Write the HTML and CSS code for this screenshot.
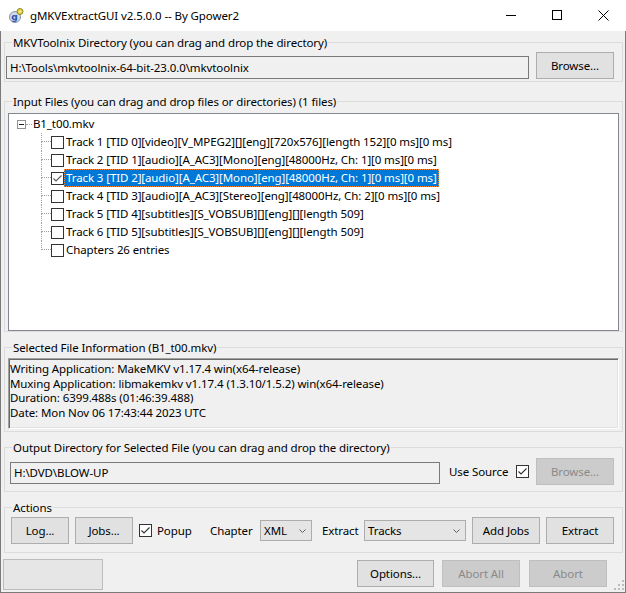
FILE: index.html
```html
<!DOCTYPE html>
<html>
<head>
<meta charset="utf-8">
<title>gMKVExtractGUI</title>
<link rel="stylesheet" href="styles.css">
</head>
<body>
<div class="window">
  <div class="titlebar">
    <svg class="app-icon" viewBox="0 0 16 16" width="16" height="16">
      <circle cx="7" cy="10" r="5.5" fill="#d4dae4" stroke="#8494ac" stroke-width="1"/>
      <text x="3.2" y="12.6" font-family="DejaVu Sans, sans-serif" font-size="9" font-weight="bold" fill="#2452b4">g</text>
      <circle cx="12" cy="4.5" r="3" fill="#e6d23c" stroke="#8c8a2a" stroke-width="1"/>
      <circle cx="12" cy="4.5" r="1" fill="#fff8b0"/>
    </svg>
    <span class="title">gMKVExtractGUI v2.5.0.0 -- By Gpower2</span>
    <div class="caption">
      <span class="cap-btn"><svg width="10" height="10" viewBox="0 0 10 10"><path d="M0 5.5H10" stroke="#000" stroke-width="1"/></svg></span>
      <span class="cap-btn"><svg width="10" height="10" viewBox="0 0 10 10"><rect x="0.5" y="0.5" width="9" height="9" fill="none" stroke="#000" stroke-width="1"/></svg></span>
      <span class="cap-btn"><svg width="11" height="11" viewBox="0 0 11 11"><path d="M0.5 0.5L10.5 10.5M10.5 0.5L0.5 10.5" stroke="#000" stroke-width="1"/></svg></span>
    </div>
  </div>

  <div class="client">
    <fieldset class="group g-mkv">
      <legend>MKVToolnix Directory (you can drag and drop the directory)</legend>
      <div class="gbody">
        <div class="textbox tb-mkv">H:\Tools\mkvtoolnix-64-bit-23.0.0\mkvtoolnix</div>
        <button class="btn btn-browse">Browse...</button>
      </div>
    </fieldset>

    <fieldset class="group g-input">
      <legend>Input Files (you can drag and drop files or directories) (1 files)</legend>
      <div class="gbody">
        <div class="tree">
          <div class="trow root">
            <svg class="expander" width="9" height="9" viewBox="0 0 9 9"><rect x="0.5" y="0.5" width="8" height="8" fill="#fff" stroke="#919191"/><path d="M2 4.5H7" stroke="#1e1e1e"/></svg>
            <span class="root-line"></span>
            <span class="root-text">B1_t00.mkv</span>
          </div>
          <div class="children">
            <div class="trow">
              <span class="branch"><span class="up"></span><span class="down"></span></span>
              <span class="cb"></span>
              <span class="tlabel">Track 1 [TID 0][video][V_MPEG2][][eng][720x576][length 152][0 ms][0 ms]</span>
            </div>
            <div class="trow">
              <span class="branch"><span class="up"></span><span class="down"></span></span>
              <span class="cb"></span>
              <span class="tlabel">Track 2 [TID 1][audio][A_AC3][Mono][eng][48000Hz, Ch: 1][0 ms][0 ms]</span>
            </div>
            <div class="trow">
              <span class="branch"><span class="up"></span><span class="down"></span></span>
              <span class="cb checked gray"><svg width="11" height="11" viewBox="0 0 11 11"><path d="M1.5 5.5L4 8L9.5 2.5" fill="none" stroke="#5a5a5a" stroke-width="1.1"/></svg></span>
              <span class="tlabel sel">Track 3 [TID 2][audio][A_AC3][Mono][eng][48000Hz, Ch: 1][0 ms][0 ms]</span>
            </div>
            <div class="trow">
              <span class="branch"><span class="up"></span><span class="down"></span></span>
              <span class="cb"></span>
              <span class="tlabel">Track 4 [TID 3][audio][A_AC3][Stereo][eng][48000Hz, Ch: 2][0 ms][0 ms]</span>
            </div>
            <div class="trow">
              <span class="branch"><span class="up"></span><span class="down"></span></span>
              <span class="cb"></span>
              <span class="tlabel">Track 5 [TID 4][subtitles][S_VOBSUB][][eng][][length 509]</span>
            </div>
            <div class="trow">
              <span class="branch"><span class="up"></span><span class="down"></span></span>
              <span class="cb"></span>
              <span class="tlabel">Track 6 [TID 5][subtitles][S_VOBSUB][][eng][][length 509]</span>
            </div>
            <div class="trow last">
              <span class="branch"><span class="up"></span><span class="down"></span></span>
              <span class="cb"></span>
              <span class="tlabel">Chapters 26 entries</span>
            </div>
          </div>
        </div>
      </div>
    </fieldset>

    <fieldset class="group g-info">
      <legend>Selected File Information (B1_t00.mkv)</legend>
      <div class="gbody">
        <div class="info">
          <div class="info-line">Writing Application: MakeMKV v1.17.4 win(x64-release)</div>
          <div class="info-line">Muxing Application: libmakemkv v1.17.4 (1.3.10/1.5.2) win(x64-release)</div>
          <div class="info-line">Duration: 6399.488s (01:46:39.488)</div>
          <div class="info-line">Date: Mon Nov 06 17:43:44 2023 UTC</div>
        </div>
      </div>
    </fieldset>

    <fieldset class="group g-out">
      <legend>Output Directory for Selected File (you can drag and drop the directory)</legend>
      <div class="gbody">
        <div class="textbox tb-out">H:\DVD\BLOW-UP</div>
        <span class="use-src">Use Source</span>
        <span class="cb checked"><svg width="11" height="11" viewBox="0 0 11 11"><path d="M1.5 5.5L4 8L9.5 2.5" fill="none" stroke="#333" stroke-width="1.1"/></svg></span>
        <button class="btn btn-browse disabled">Browse...</button>
      </div>
    </fieldset>

    <fieldset class="group g-actions">
      <legend>Actions</legend>
      <div class="gbody">
        <button class="btn btn-small">Log...</button>
        <button class="btn btn-small btn-jobs">Jobs...</button>
        <span class="cb checked cb-popup"><svg width="11" height="11" viewBox="0 0 11 11"><path d="M1.5 5.5L4 8L9.5 2.5" fill="none" stroke="#333" stroke-width="1.1"/></svg></span>
        <span class="lbl lbl-popup">Popup</span>
        <span class="lbl lbl-chapter">Chapter</span>
        <div class="combo combo-xml"><span>XML</span><svg class="chev" width="7" height="4" viewBox="0 0 7 4"><path d="M0.5 0.5L3.5 3.5L6.5 0.5" fill="none" stroke="#606060"/></svg></div>
        <span class="lbl lbl-extract">Extract</span>
        <div class="combo combo-tracks"><span>Tracks</span><svg class="chev" width="7" height="4" viewBox="0 0 7 4"><path d="M0.5 0.5L3.5 3.5L6.5 0.5" fill="none" stroke="#606060"/></svg></div>
        <button class="btn btn-wide btn-addjobs">Add Jobs</button>
        <button class="btn btn-wide btn-extract">Extract</button>
      </div>
    </fieldset>

    <div class="bottombar">
      <div class="progress"></div>
      <button class="btn btn-options">Options...</button>
      <button class="btn btn-abortall disabled">Abort All</button>
      <button class="btn btn-abort disabled">Abort</button>
      <svg class="grip" width="10" height="10" viewBox="0 0 10 10">
        <rect x="8" y="0" width="2" height="2" fill="#bcbcbc"/>
        <rect x="4" y="4" width="2" height="2" fill="#bcbcbc"/>
        <rect x="8" y="4" width="2" height="2" fill="#bcbcbc"/>
        <rect x="0" y="8" width="2" height="2" fill="#bcbcbc"/>
        <rect x="4" y="8" width="2" height="2" fill="#bcbcbc"/>
        <rect x="8" y="8" width="2" height="2" fill="#bcbcbc"/>
      </svg>
    </div>
  </div>
</div>
</body>
</html>
```

FILE: styles.css
```css
* { box-sizing: border-box; }
html, body { margin: 0; padding: 0; background: #f0f0f0; }
body {
  font-family: "Noto Sans", "Open Sans", sans-serif;
  font-size: 11.5px;
  letter-spacing: -0.1px;
  color: #000;
}

.window {
  width: 626px;
  height: 593px;
  display: flex;
  flex-direction: column;
  background: #f0f0f0;
  overflow: hidden;
}

/* title bar */
.titlebar {
  flex: none;
  height: 31px;
  background: #fff;
  display: flex;
  align-items: center;
}
.app-icon { flex: none; margin-left: 8px; margin-top: -1px; }
.title { margin-left: 6px; line-height: 15px; white-space: nowrap; }
.caption { margin-left: auto; display: flex; align-self: flex-start; }
.cap-btn {
  width: 46px;
  height: 30px;
  display: flex;
  align-items: center;
  justify-content: center;
}

/* client area */
.client {
  flex: 1;
  display: flex;
  flex-direction: column;
  border: 1px solid #7a7a7a;
  border-top: 0;
}

.group {
  margin: 0 2px 0 3px;
  padding: 0;
  border: 1px solid #dcdcdc;
  min-width: 0;
}
.group legend {
  margin-left: 7px;
  padding: 0 1px;
  line-height: 15px;
  height: 15px;
  white-space: nowrap;
}
.g-mkv { margin-top: 4px; }
.g-input { margin-top: 12px; }
.g-info, .g-out, .g-actions { margin-top: 8px; }

/* generic controls */
.textbox {
  border: 1px solid #7a7a7a;
  background: #f0f0f0;
  padding-left: 3px;
  white-space: nowrap;
  overflow: hidden;
}
.btn {
  flex: none;
  height: 27px;
  padding: 0;
  margin: 0;
  border: 1px solid #adadad;
  background: #e1e1e1;
  font: inherit;
  letter-spacing: inherit;
  color: #000;
  display: flex;
  align-items: center;
  justify-content: center;
  white-space: nowrap;
}
.btn.disabled {
  background: #cccccc;
  border-color: #bfbfbf;
  color: #8a8a8a;
}
.cb {
  flex: none;
  width: 13px;
  height: 13px;
  border: 1px solid #333;
  background: #fff;
  display: flex;
  align-items: center;
  justify-content: center;
}
.cb svg { display: block; }

/* MKVToolnix group */
.g-mkv .gbody {
  display: flex;
  align-items: flex-start;
  gap: 7px;
  padding: 2px 8px 2px 1px;
}
.tb-mkv { width: 523px; height: 23px; line-height: 21px; margin-top: 4px; }
.btn-browse { width: 78px; }

/* Input files / tree */
.g-input .gbody { padding: 4px 3px 0 3px; }
.tree {
  width: 611px;
  height: 218px;
  background: #fff;
  border: 1px solid #828790;
  padding-top: 1px;
  overflow: hidden;
}
.trow {
  height: 18px;
  display: flex;
  align-items: center;
  line-height: 18px;
  white-space: nowrap;
}
.root { padding-left: 8px; }
.expander { flex: none; display: block; }
.root-line {
  width: 6px;
  height: 1px;
  border-top: 1px dotted #a0a0a0;
  margin-top: 1px;
}
.root-text { margin-left: 1px; }
.children .trow { padding-left: 32px; }
.branch {
  flex: none;
  width: 10px;
  height: 18px;
  display: flex;
  flex-direction: column;
}
.branch .up {
  height: 9px;
  border-left: 1px dotted #a0a0a0;
  border-bottom: 1px dotted #a0a0a0;
}
.branch .down {
  height: 9px;
  border-left: 1px dotted #a0a0a0;
}
.trow.last .branch .down { border-left-color: transparent; }
.tlabel { padding: 0 2px; height: 18px; line-height: 18px; }
.tlabel.sel {
  background: #0078d7;
  color: #fff;
  outline: 1px dotted #ff8728;
  outline-offset: -1px;
}

/* Selected file info */
.g-info .gbody { padding: 3px 3px 2px 3px; }
.info {
  height: 71px;
  border: 1px solid;
  border-color: #a0a0a0 #ffffff #ffffff #a0a0a0;
  box-shadow: inset 1px 1px 0 #696969, inset -1px -1px 0 #e3e3e3;
  padding: 3px 0 0 1px;
  white-space: nowrap;
}
.info-line { height: 14.67px; line-height: 14.67px; }

/* Output directory */
.g-out .gbody {
  display: flex;
  align-items: center;
  padding: 3px 8px 6px 5px;
}
.tb-out { width: 430px; height: 22px; line-height: 20px; margin-top: 2px; }
.use-src { margin-left: 9px; white-space: nowrap; }
.g-out .cb { margin-left: auto; }
.g-out .btn-browse { margin-left: 7px; }

/* Actions */
.g-actions .gbody {
  display: flex;
  align-items: center;
  padding: 2px 8px 8px 6px;
}
.btn-small { width: 58px; }
.btn-jobs { margin-left: 6px; }
.cb-popup { margin-left: 6px; }
.lbl { white-space: nowrap; flex: none; }
.lbl-popup { width: 58px; padding-left: 5px; }
.lbl-chapter { width: 50px; }
.lbl-extract { width: 42px; }
.combo {
  flex: none;
  height: 21px;
  border: 1px solid #adadad;
  background: #e5e5e5;
  display: flex;
  align-items: center;
  padding-left: 3px;
  line-height: 19px;
}
.combo .chev { margin-left: auto; margin-right: 5px; display: block; }
.combo-xml { width: 52px; margin-right: 10px; }
.combo-tracks { width: 102px; }
.btn-wide { width: 68px; margin-left: 6px; }

/* bottom bar */
.bottombar {
  flex: none;
  display: flex;
  height: 31px;
  margin-top: 6px;
  padding-left: 2px;
  padding-right: 1px;
}
.progress {
  width: 100px;
  height: 31px;
  background: #e6e6e6;
  border: 1px solid #bcbcbc;
}
.bottombar .btn { margin-top: 1px; }
.btn-options { width: 77px; margin-left: auto; }
.btn-abortall { width: 78px; margin-left: 8px; }
.btn-abort { width: 78px; margin-left: 9px; }
.grip { align-self: flex-end; margin-left: 7px; display: block; }
```
